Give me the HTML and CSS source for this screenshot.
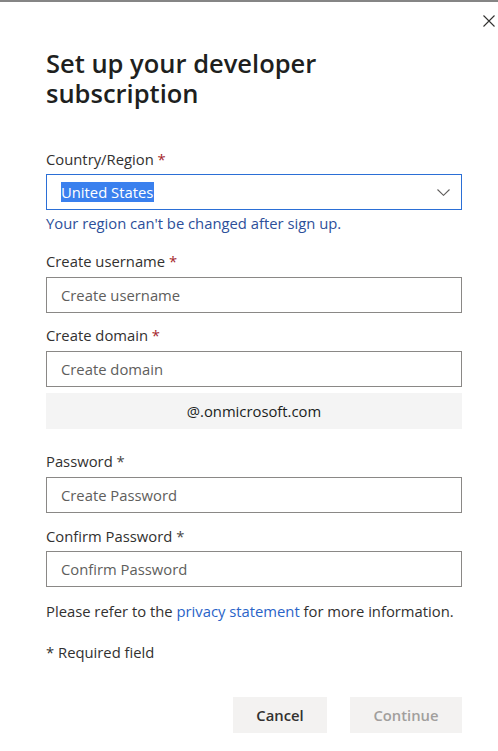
FILE: index.html
```html
<!DOCTYPE html>
<html lang="en">
<head>
<meta charset="utf-8">
<title>Set up your developer subscription</title>
<link rel="stylesheet" href="styles.css">
</head>
<body>
<div class="dialog">
  <button class="close" aria-label="Close">
    <svg width="12" height="12" viewBox="0 0 12 12"><path d="M0.5 0.5L11.5 11.5M11.5 0.5L0.5 11.5" stroke="#323130" stroke-width="1.1" fill="none"/></svg>
  </button>
  <h1 class="title">Set up your developer subscription</h1>

  <div class="field first">
    <label class="label">Country/Region <span class="req">*</span></label>
    <div class="select">
      <span class="selected">United States</span>
      <svg class="chev" width="13" height="7" viewBox="0 0 13 7"><path d="M0.5 0.5L6.5 6.3L12.5 0.5" stroke="#605e5c" stroke-width="1.1" fill="none"/></svg>
    </div>
    <div class="helper">Your region can't be changed after sign up.</div>
  </div>

  <div class="field user">
    <label class="label">Create username <span class="req">*</span></label>
    <div class="input">Create username</div>
  </div>

  <div class="field domain">
    <label class="label">Create domain <span class="req">*</span></label>
    <div class="input">Create domain</div>
    <div class="suffix">@.onmicrosoft.com</div>
  </div>

  <div class="field pass">
    <label class="label">Password <span class="req dark">*</span></label>
    <div class="input">Create Password</div>
  </div>

  <div class="field confirm">
    <label class="label">Confirm Password <span class="req dark">*</span></label>
    <div class="input">Confirm Password</div>
  </div>

  <p class="note">Please refer to the <a class="link" href="#">privacy statement</a> for more information.</p>
  <p class="required">* Required field</p>

  <div class="actions">
    <button class="btn cancel">Cancel</button>
    <button class="btn continue">Continue</button>
  </div>
</div>
</body>
</html>
```
FILE: styles.css
```css
html, body {
  margin: 0;
  padding: 0;
  background: #ffffff;
}
body {
  border-top: 2px solid #858585;
  font-family: "Open Sans", "Noto Sans", sans-serif;
  font-size: 14.8px;
  color: #323130;
}
.dialog {
  position: relative;
  width: 416px;
  padding: 46px 0 0 46px;
}
.close {
  position: absolute;
  top: 13px;
  left: 483px;
  width: 12px;
  height: 12px;
  padding: 0;
  border: 0;
  background: none;
  display: block;
}
.close svg { display: block; }
.title {
  margin: 0;
  font-size: 25.5px;
  font-weight: 600;
  line-height: 30px;
  color: #201f1e;
  width: 300px;
}
.label {
  display: block;
  line-height: 20px;
  margin-bottom: 5px;
}
.req { color: #a4262c; }
.req.dark { color: #484644; }
.field.first { margin-top: 41px; }
.field.user { margin-top: 18px; }
.field.user .label,
.field.domain .label,
.field.pass .label { margin-bottom: 6px; }
.field.domain { margin-top: 12px; }
.field.pass { margin-top: 22px; }
.field.confirm { margin-top: 13px; }
.field.confirm .label { margin-bottom: 5px; }
.select {
  box-sizing: border-box;
  height: 36px;
  border: 1px solid #2b6fd6;
  display: flex;
  align-items: center;
  justify-content: space-between;
  padding: 0 11px 0 14px;
}
.selected {
  background: #3a80ee;
  color: #ffffff;
  line-height: 20px;
  padding-right: 1px;
}
.chev { display: block; margin-top: 1px; }
.helper {
  margin-top: 3px;
  line-height: 20px;
  color: #2d4f9a;
}
.input {
  box-sizing: border-box;
  height: 36px;
  border: 1px solid #8a8886;
  padding: 0 14px;
  display: flex;
  align-items: center;
  color: #605e5c;
}
.suffix {
  margin-top: 6px;
  height: 36px;
  background: #f4f4f4;
  display: flex;
  align-items: center;
  justify-content: center;
  color: #201f1e;
}
.note {
  margin: 14px 0 0;
  line-height: 20px;
  white-space: nowrap;
}
.link {
  color: #2a64c8;
  text-decoration: none;
}
.required {
  margin: 21px 0 0;
  line-height: 20px;
}
.actions {
  margin-top: 35px;
  display: flex;
  justify-content: flex-end;
  gap: 23px;
}
.btn {
  height: 36px;
  border: 0;
  background: #f3f2f1;
  font-family: "Open Sans", "Noto Sans", sans-serif;
  font-size: 14.8px;
  font-weight: 600;
  padding: 0;
}
.cancel { width: 94px; color: #323130; }
.continue { width: 112px; color: #a19f9d; }
```
